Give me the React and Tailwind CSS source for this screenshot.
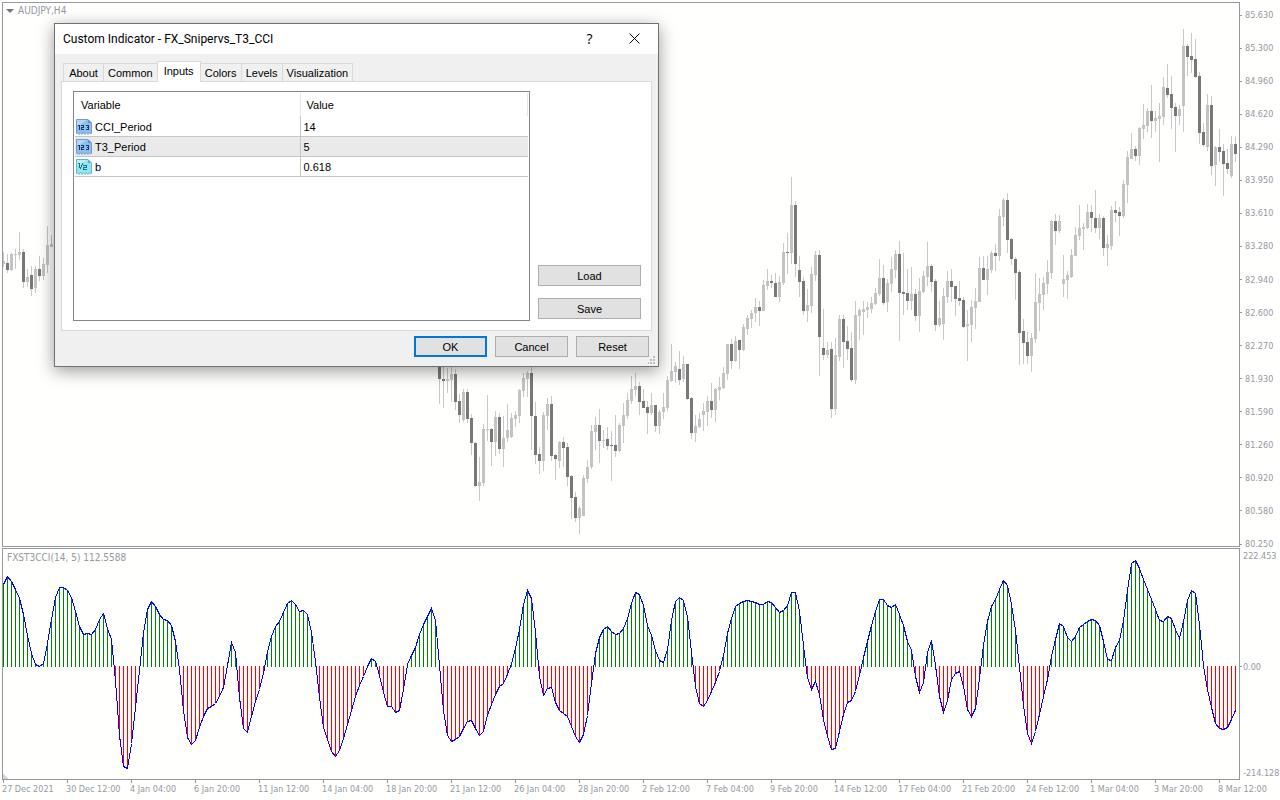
import {useState} from "react";

const STEP = 4;
const FIRST_X = 3;
const ZERO_Y = 666;

// high, top, bottom, low, falling
const candlesLeft = [
    [252,261,264,267,0],[254,263,270,273,1],[253,254,270,271,0],[249,254,255,269,0],[232,252,255,260,0],[249,252,282,288,1],
    [269,277,282,287,0],[266,275,289,296,1],[266,269,288,293,0],[256,269,276,281,1],[258,264,276,280,0],[226,245,265,273,0],
    [235,244,247,247,0],
];
const RIGHT_START = 109;
const candlesRight = [
    [360,366,379,404,1],[362,379,381,408,1],[368,379,381,393,0],[360,374,380,402,0],[369,374,402,410,1],[394,401,415,423,1],
    [389,392,420,422,0],[389,392,419,423,1],[414,418,443,455,1],[442,443,486,487,1],[457,482,486,501,0],[424,429,483,486,0],
    [395,429,430,441,0],[428,429,442,466,1],[411,417,442,456,0],[413,417,449,454,1],[416,438,449,467,0],[404,430,438,442,0],
    [413,418,437,438,0],[411,415,419,427,0],[389,390,416,423,0],[373,378,391,397,0],[371,373,379,397,0],[364,373,416,450,1],
    [402,416,455,464,1],[447,454,461,474,1],[412,415,461,471,0],[398,404,416,430,0],[396,404,456,461,1],[454,455,459,480,1],
    [441,442,461,468,0],[437,442,448,467,1],[443,447,477,486,1],[475,476,498,519,1],[492,497,518,522,1],[506,508,518,534,0],
    [475,478,516,516,0],[460,467,479,483,0],[425,431,467,469,0],[417,425,432,450,0],[409,425,441,463,1],[430,440,441,448,0],
    [427,439,446,450,1],[431,445,446,481,1],[415,445,451,457,1],[423,425,451,452,0],[403,415,426,443,0],[393,400,416,419,0],
    [376,389,401,404,0],[373,386,390,396,0],[382,386,402,415,1],[389,401,408,408,1],[401,407,413,434,1],[393,405,413,415,0],
    [405,405,426,432,1],[410,412,426,434,0],[393,407,412,419,0],[376,380,408,411,0],[344,371,381,382,0],[362,366,372,383,0],
    [351,369,380,385,1],[356,364,379,382,0],[364,364,399,400,1],[397,398,433,439,1],[415,426,433,442,0],[413,419,427,428,0],
    [403,411,415,431,0],[396,401,412,426,0],[383,401,410,418,1],[388,389,410,422,0],[377,387,390,400,0],[367,373,388,389,0],
    [344,344,374,380,0],[339,344,361,369,1],[336,341,361,362,0],[340,340,350,369,1],[324,327,350,351,0],[315,318,329,335,0],
    [310,313,319,328,0],[298,307,313,322,0],[301,307,311,326,1],[280,285,311,311,0],[269,281,286,290,0],[275,281,283,288,1],
    [273,283,297,297,1],[276,282,297,302,0],[243,252,283,285,0],[233,252,253,274,1],[177,205,253,264,0],[201,205,264,277,1],
    [256,270,282,297,1],[277,281,311,315,1],[289,305,311,322,0],[267,274,306,313,0],[251,255,275,281,0],[250,255,337,376,1],
    [309,348,355,360,1],[342,350,355,358,0],[342,349,409,418,1],[338,355,409,415,0],[315,319,357,361,0],[315,319,342,368,1],
    [326,341,349,360,1],[332,348,380,382,1],[301,315,380,384,0],[308,310,316,340,0],[301,309,312,335,0],[302,307,310,318,0],
    [297,303,309,313,0],[288,293,304,305,0],[259,278,294,296,0],[265,278,303,305,1],[279,283,302,312,0],[257,269,284,292,0],
    [250,254,270,278,0],[241,254,293,341,1],[253,292,294,315,1],[269,293,301,310,1],[267,294,301,310,0],[289,294,316,321,1],
    [278,291,316,332,0],[271,276,292,293,0],[242,266,277,286,0],[264,266,282,292,1],[279,281,325,331,1],[301,318,325,327,0],
    [288,296,324,340,0],[271,281,297,303,0],[269,281,287,302,1],[286,286,299,316,1],[281,298,301,306,1],[297,300,327,328,1],
    [310,324,326,361,0],[300,307,325,342,0],[288,301,308,329,0],[257,268,302,302,0],[256,268,280,280,1],[256,269,280,295,0],
    [251,253,270,273,0],[244,253,256,271,1],[209,216,256,261,0],[198,200,217,226,0],[193,200,240,253,1],[238,239,259,265,1],
    [257,259,273,300,1],[270,272,333,365,1],[319,331,343,364,1],[332,342,356,364,1],[333,338,356,372,0],[273,302,339,343,0],
    [278,294,303,331,0],[277,283,295,310,0],[260,272,284,294,0],[220,221,273,279,0],[214,221,231,245,1],[215,221,231,233,0],
    [255,279,284,297,0],[271,275,280,299,0],[249,255,277,278,0],[227,235,256,256,0],[205,228,236,240,0],[223,227,229,250,0],
    [204,212,228,229,0],[205,212,218,232,1],[190,218,228,233,1],[214,218,228,239,0],[216,218,248,256,1],[235,244,248,266,0],
    [206,210,246,250,0],[201,210,213,222,1],[207,212,216,236,1],[180,184,216,218,0],[151,157,185,203,0],[133,149,159,159,0],
    [146,149,156,161,1],[127,128,156,165,0],[104,125,129,139,0],[108,111,126,132,0],[85,111,121,138,1],[111,118,121,132,0],
    [103,116,119,162,0],[77,87,117,125,0],[64,88,95,98,1],[76,94,108,129,1],[103,107,116,152,1],[105,109,116,125,0],
    [29,46,106,132,0],[44,46,57,76,1],[33,56,60,73,1],[39,59,77,78,1],[72,76,133,144,1],[123,132,145,147,1],
    [94,105,147,151,0],[96,105,166,175,1],[146,147,165,186,0],[129,147,152,162,1],[144,151,164,196,1],[149,163,169,174,1],
    [136,144,176,178,0],[137,144,154,162,1],
];

const cci = [
    82,90,85,77,68,52,31,13,2,0,3,23,47,69,79,79,76,69,55,40,32,33,32,37,47,53,38,27,-14,-69,-100,-102,-77,-41,-4,34,57,65,60,52,
    47,46,41,25,-3,-44,-71,-78,-74,-61,-50,-42,-40,-37,-30,-21,1,24,14,-31,-62,-66,-50,-35,-23,-7,15,30,40,45,54,63,66,62,55,56,52,34,5,-31,
    -61,-73,-85,-90,-84,-72,-58,-44,-30,-19,-10,0,8,5,-9,-26,-40,-40,-46,-44,-23,2,11,19,32,42,50,58,46,1,-44,-69,-75,-73,-70,-62,-55,-54,-62,-69,
    -65,-49,-38,-28,-20,-17,-8,3,18,37,62,76,68,34,-10,-29,-22,-21,-36,-44,-47,-50,-60,-70,-76,-68,-49,-17,13,29,37,40,35,32,33,38,48,63,74,72,
    61,41,31,16,6,4,17,46,65,69,66,50,14,-20,-37,-40,-34,-25,-16,-5,11,33,48,60,63,65,66,65,64,62,62,65,64,59,54,56,61,74,74,55,
    21,-11,-23,-15,-28,-53,-70,-83,-82,-65,-48,-36,-34,-25,-9,9,25,41,55,67,67,61,59,62,52,41,25,16,-10,-26,-16,14,26,1,-30,-46,-34,-13,-7,-5,
    -20,-43,-50,-42,-12,21,45,60,67,77,86,81,62,36,-1,-39,-67,-77,-65,-48,-30,-13,10,27,43,40,29,25,30,39,42,45,47,46,41,25,7,6,19,26,
    46,76,103,106,98,87,77,67,57,46,45,50,48,37,28,45,66,76,73,42,1,-23,-41,-57,-62,-63,-61,-53,-44,
];

const prices = ['85.630','85.300','84.960','84.620','84.290','83.950','83.610','83.280','82.940','82.600','82.270','81.930','81.590','81.260','80.920','80.580','80.250'];

const dates = ['27 Dec 2021','30 Dec 12:00','4 Jan 04:00','6 Jan 20:00','11 Jan 12:00','14 Jan 04:00','18 Jan 20:00','21 Jan 12:00','26 Jan 04:00','28 Jan 20:00',
    '2 Feb 12:00','7 Feb 04:00','9 Feb 20:00','14 Feb 12:00','17 Feb 04:00','21 Feb 20:00','24 Feb 12:00','1 Mar 04:00','3 Mar 20:00','8 Mar 12:00'];

const tabs = ['About','Common','Inputs','Colors','Levels','Visualization'];

const inputs = [
    { name: 'CCI_Period', value: '14', type: 'int' },
    { name: 'T3_Period', value: '5', type: 'int' },
    { name: 'b', value: '0.618', type: 'double' },
];

function Candle({index, data}) {
    const [ high, top, bottom, low, falling ] = data;
    const x = FIRST_X + index * STEP;
    return <g>
        <rect x={x} y={high} width="1" height={low - high} fill="#c8c8c8"/>
        <rect x={x - 1} y={top} width="3" height={bottom - top} fill={falling ? '#787878' : '#c3c3c3'}/>
    </g>
}

function PriceChart() {
    return <svg className="flex-1 min-w-0 border border-[#9698a0]" viewBox="3 3 1236 543" preserveAspectRatio="none"
                shapeRendering="crispEdges" role="img" aria-label="AUDJPY H4 candles">
        {candlesLeft.map( (c, i) => <Candle key={i} index={i} data={c}/> )}
        {candlesRight.map( (c, i) => <Candle key={i} index={RIGHT_START + i} data={c}/> )}
    </svg>
}

function CciChart() {
    const line = cci.map( (v, i) => ( FIRST_X + i * STEP + 0.5 ) + ',' + ( ZERO_Y - v + 0.5 ) ).join( ' ' );
    return <svg className="flex-1 min-w-0 border border-[#9698a0]" viewBox="3 549 1236 230" preserveAspectRatio="none"
                shapeRendering="crispEdges" role="img" aria-label="FXST3CCI histogram">
        {cci.map( (v, i) => v === 0 ? null :
            <rect key={i} x={FIRST_X + i * STEP} y={v > 0 ? ZERO_Y - v : ZERO_Y} width="1"
                  height={Math.abs( v ) + ( v > 0 ? 1 : 0 )} fill={v > 0 ? '#008000' : '#ff0000'}/> )}
        <polyline points={line} fill="none" stroke="#0000ff" strokeWidth="1"/>
        <path d="M3 774l5 5h-5z" fill="#d4d4d4"/>
    </svg>
}

function InputIcon({type}) {
    const int = type === 'int';
    return <svg className="w-4 h-4 shrink-0" viewBox="0 0 16 16" aria-hidden="true">
        <path d="M.5 .5h11.500l3.500 3.500v10.500l-1 .5-1-1.500-1.500 2-1.500-2-1.500 2-1.500-2-1.500 2-1.500-2-1.500 2-1.500-1.500-1 .5z"
              fill={int ? '#8fbdec' : '#92e4ee'} stroke={int ? '#6c9fd2' : '#5cbccb'}/>
        <path d="M1 1h10l-7 5h-3z" fill={int ? '#b4d6f6' : '#b8f0f6'}/>
        <path d="M12 .5v3.500h3.500z" fill={int ? '#5f93c8' : '#58b4c4'}/>
        {int
            ? <path d="M2 6h2v5h-1v-4h-1zM5 6h3v3h-2v1h2v1h-3v-3h2v-1h-2zM10 6h3v5h-3v-1h2v-1h-1v-1h1v-1h-2z" fill="#16396a" shapeRendering="crispEdges"/>
            : <path d="M2 4h2v5h-1v-4h-1zM6 4h1v2h-1v2h-1v2h-1v-2h1v-2h1zM7 6h4v3h-3v1h3v1h-4v-3h3v-1h-3z" fill="#1a7480" shapeRendering="crispEdges"/>}
    </svg>
}

function DialogButton({children, primary, wide}) {
    return <button type="button"
                   className={ 'h-[21px] flex items-center justify-center bg-[#e1e1e1] ' +
                   ( wide ? 'w-[103px] ' : 'w-[73px] ' ) +
                   ( primary ? 'border-2 border-[#0078d7]' : 'border border-[#adadad]' ) }>
        {children}
    </button>
}

function Tab({label, active, onClick}) {
    return <button type="button" role="tab" aria-selected={active} onClick={onClick}
                   className={ 'min-w-[41px] border-[#d9d9d9] ' +
                   ( active ? 'relative h-[21px] -mb-px -ml-px px-1.5 pb-0.5 bg-white border-x border-t' : 'h-[18px] px-1 border-r border-t first:border-l' ) }>
        {label}
    </button>
}

function IndicatorDialog() {
    const [ tab, setTab ] = useState( 'Inputs' );
    const [ selected, setSelected ] = useState( 1 );

    return <div role="dialog" aria-labelledby="dialog-title"
                className="absolute left-[54px] top-[23px] w-[605px] border border-[#707070] bg-[#f0f0f0] text-black text-[11px] leading-4 font-['Liberation_Sans',Arial,sans-serif] shadow-[0_4px_16px_rgba(0,0,0,0.4)]">
        <div className="h-[30px] pl-2 pr-px pb-px flex items-center bg-white">
            <h1 id="dialog-title" className="flex-1 text-[12px] font-['Roboto',sans-serif]">Custom Indicator - FX_Snipervs_T3_CCI</h1>
            <button type="button" aria-label="Help" className="w-[45px] h-full text-[14px] font-['Open_Sans',sans-serif]">?</button>
            <button type="button" aria-label="Close" className="w-[45px] h-full flex items-center justify-center">
                <svg className="w-[11px] h-[11px]" viewBox="0 0 11 11"><path d="M.5 .5l10 10M10.500 .5l-10 10" stroke="#000" fill="none"/></svg>
            </button>
        </div>

        <div className="px-1.5 pt-[7px]">
            <div role="tablist" className="flex items-end pl-0.5">
                {tabs.map( (t) => <Tab key={t} label={t} active={t === tab} onClick={() => setTab( t )}/> )}
            </div>
            <div role="tabpanel" className="flex gap-2 bg-white border border-[#d9d9d9] pl-[11px] pr-2.5 py-[9px]">
                <div className="flex-1 h-[230px] border border-[#828790] p-px">
                    <table className="w-full table-fixed border-collapse">
                        <thead>
                            <tr className="h-[23px]">
                                <th className="w-[225px] pl-1.5 text-left font-normal border-r border-[#e5e5e5]">Variable</th>
                                <th className="pl-1.5 text-left font-normal border-r border-[#e5e5e5]">Value</th>
                            </tr>
                        </thead>
                        <tbody>
                            {inputs.map( (row, i) => <tr key={row.name} onClick={() => setSelected( i )}
                                                         className={ 'h-5 border-b border-[#c6c6c6] ' + ( i === selected ? 'bg-[#eaeaea]' : '' ) }>
                                <td className="pl-px pt-0.5 border-r border-[#c6c6c6]">
                                    <span className="flex items-center gap-[3px]"><InputIcon type={row.type}/>{row.name}</span>
                                </td>
                                <td className="pl-[3px] pt-0.5">{row.value}</td>
                            </tr> )}
                        </tbody>
                    </table>
                </div>
                <div className="flex flex-col justify-end gap-3 pb-0.5">
                    <DialogButton wide>Load</DialogButton>
                    <DialogButton wide>Save</DialogButton>
                </div>
            </div>
        </div>

        <div className="flex justify-end gap-2 pt-[5px] pb-[9px] pr-[9px]">
            <DialogButton primary>OK</DialogButton>
            <DialogButton>Cancel</DialogButton>
            <DialogButton>Reset</DialogButton>
        </div>
        <svg className="absolute right-[3px] bottom-0.5 w-[7px] h-2" viewBox="0 0 7 8" shapeRendering="crispEdges" aria-hidden="true">
            <path d="M5 0h2v2h-2zM2 3h2v2h-2zM5 3h2v2h-2zM0 6h1v2h-1zM2 6h2v2h-2zM5 6h2v2h-2z" fill="#bfbfbf"/>
        </svg>
    </div>
}

export default () => {
    return <main className="relative h-screen flex flex-col gap-px pt-0.5 bg-[#fffffe] text-[#9698a0] text-[9px] leading-3 font-['DejaVu_Sans_Condensed','Noto_Sans',sans-serif] overflow-hidden">
        <section className="relative flex-[545] min-h-0 flex pl-0.5">
            <PriceChart/>
            <div className="absolute left-1.5 top-[3px] flex items-center gap-1">
                <svg className="w-2 h-1" viewBox="0 0 8 4" aria-hidden="true"><path d="M0 0h8l-4 4z" fill="#70747c"/></svg>
                <h2 className="text-[10px]">AUDJPY,H4</h2>
            </div>
            <ul className="w-10 flex flex-col justify-between pt-[7px] -mb-[3px]">
                {prices.map( (p) => <li key={p} className="flex items-center gap-[3px]"><span className="w-0.5 h-px bg-[#9698a0]"/>{p}</li> )}
            </ul>
        </section>

        <section className="relative flex-[232] min-h-0 flex pl-0.5">
            <CciChart/>
            <h2 className="absolute left-[7px] top-1 text-[10px]">FXST3CCI(14, 5) 112.5588</h2>
            <div className="w-10 pt-0.5 pb-px flex flex-col justify-between">
                <span className="pl-[3px]">222.453</span>
                <span className="flex items-center gap-px pt-1"><span className="w-0.5 h-px bg-[#9698a0]"/>0.00</span>
                <span className="pl-[3px]">-214.128</span>
            </div>
        </section>

        <ol className="h-5 -mt-px pl-0.5 flex">
            {dates.map( (d) => <li key={d} className="w-[64px] shrink-0 whitespace-nowrap">
                <span className="block ml-px w-px h-[3px] bg-[#9698a0]"/>{d}
            </li> )}
        </ol>

        <IndicatorDialog/>
    </main>
}
